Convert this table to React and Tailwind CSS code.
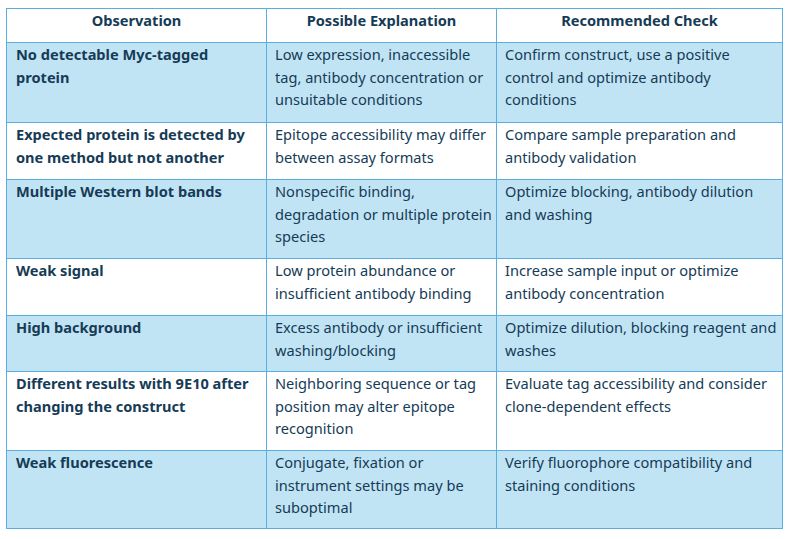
const rows = [
  {
    o: ["No detectable Myc-tagged", "protein"],
    e: ["Low expression, inaccessible", "tag, antibody concentration or", "unsuitable conditions"],
    c: ["Confirm construct, use a positive", "control and optimize antibody", "conditions"],
    h: "h-[80px]",
    blue: true,
  },
  {
    o: ["Expected protein is detected by", "one method but not another"],
    e: ["Epitope accessibility may differ", "between assay formats"],
    c: ["Compare sample preparation and", "antibody validation"],
    h: "h-[57px]",
    blue: false,
  },
  {
    o: ["Multiple Western blot bands"],
    e: ["Nonspecific binding,", "degradation or multiple protein", "species"],
    c: ["Optimize blocking, antibody dilution", "and washing"],
    h: "h-[79px]",
    blue: true,
  },
  {
    o: ["Weak signal"],
    e: ["Low protein abundance or", "insufficient antibody binding"],
    c: ["Increase sample input or optimize", "antibody concentration"],
    h: "h-[57px]",
    blue: false,
  },
  {
    o: ["High background"],
    e: ["Excess antibody or insufficient", "washing/blocking"],
    c: ["Optimize dilution, blocking reagent and", "washes"],
    h: "h-[56px]",
    blue: true,
  },
  {
    o: ["Different results with 9E10 after", "changing the construct"],
    e: ["Neighboring sequence or tag", "position may alter epitope", "recognition"],
    c: ["Evaluate tag accessibility and consider", "clone-dependent effects"],
    h: "h-[79px]",
    blue: false,
  },
  {
    o: ["Weak fluorescence"],
    e: ["Conjugate, fixation or", "instrument settings may be", "suboptimal"],
    c: ["Verify fluorophore compatibility and", "staining conditions"],
    h: "h-[78px]",
    blue: true,
  },
];

function Lines({ lines }) {
  return lines.map((l, i) => (
    <span key={i} className="block whitespace-nowrap">
      {l}
    </span>
  ));
}

export default function App() {
  return (
    <div className="w-[787px] h-[539px] bg-white pt-[8px] pl-[6px]">
      <table
        className="w-[776px] border-collapse text-[#163b56] text-[14.6px] leading-[22.5px] table-fixed"
        style={{ fontFamily: '"Noto Sans", "Open Sans", sans-serif' }}
      >
        <colgroup>
          <col className="w-[260px]" />
          <col className="w-[230px]" />
          <col className="w-[286px]" />
        </colgroup>
        <thead>
          <tr className="h-[34px]">
            {["Observation", "Possible Explanation", "Recommended Check"].map((t) => (
              <th
                key={t}
                className="border border-[#5aaee0] align-top text-center font-bold p-0"
              >
                {t}
              </th>
            ))}
          </tr>
        </thead>
        <tbody>
          {rows.map((r, i) => (
            <tr key={i} className={`${r.h} ${r.blue ? "bg-[#c1e4f5]" : "bg-white"}`}>
              <td className="border border-[#5aaee0] align-top font-bold pl-[9px] pr-1 py-0">
                <Lines lines={r.o} />
              </td>
              <td className="border border-[#5aaee0] align-top pl-[8px] pr-1 py-0">
                <Lines lines={r.e} />
              </td>
              <td className="border border-[#5aaee0] align-top pl-[8px] pr-1 py-0">
                <Lines lines={r.c} />
              </td>
            </tr>
          ))}
        </tbody>
      </table>
    </div>
  );
}
